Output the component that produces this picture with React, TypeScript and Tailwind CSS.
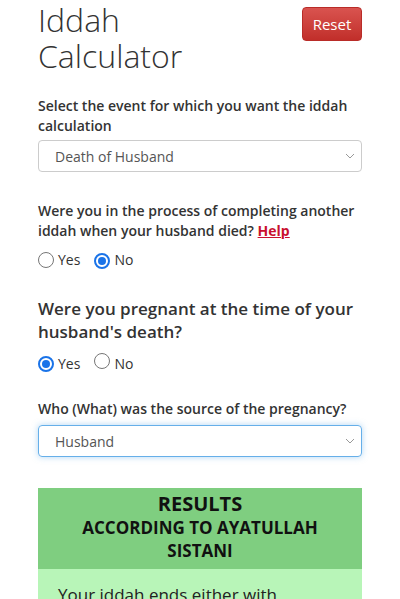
import React from "react";

function Radio({ checked }: { checked: boolean }) {
  return checked ? (
    <span className="inline-flex h-[16px] w-[16px] items-center justify-center rounded-full border-[2px] border-[#1a73e8] bg-white">
      <span className="h-[8px] w-[8px] rounded-full bg-[#1a73e8]" />
    </span>
  ) : (
    <span className="inline-block h-[16px] w-[16px] rounded-full border border-[#767676] bg-white" />
  );
}

function Chevron() {
  return (
    <svg width="10" height="6" viewBox="0 0 10 6" fill="none" className="absolute right-[6px] top-1/2 -translate-y-1/2">
      <path d="M1 1l4 4 4-4" stroke="#999" strokeWidth="1" />
    </svg>
  );
}

function RadioRow({ yes }: { yes: boolean }) {
  return (
    <div className="flex items-center text-[14px] leading-[20px] text-[#333]">
      <Radio checked={yes} />
      <span className="ml-[4px]">Yes</span>
      <span className="ml-[14px]">
        <Radio checked={!yes} />
      </span>
      <span className="ml-[4px]">No</span>
    </div>
  );
}

export default function App() {
  return (
    <div className="min-h-[599px] bg-white px-[38px] text-[#333]" style={{ fontFamily: '"Open Sans", sans-serif' }}>
      <div className="flex items-start justify-between pt-[2px]">
        <h1 className="text-[32px] font-light leading-[36px] text-[#333]">
          Iddah
          <br />
          Calculator
        </h1>
        <button className="mt-[5px] h-[34px] w-[60px] rounded-[4px] border border-[#b92c28] bg-gradient-to-b from-[#d9534f] to-[#c12e2a] text-[15px] text-white">
          Reset
        </button>
      </div>

      <p className="mt-[22px] text-[14px] font-semibold leading-[20px]">
        Select the event for which you want the iddah calculation
      </p>
      <div className="relative mt-[4px] flex h-[32px] items-center rounded-[4px] border border-[#ccc] pl-[16px] text-[14px] text-[#555]">
        Death of Husband
        <Chevron />
      </div>

      <p className="mt-[29px] text-[14px] font-semibold leading-[20px]">
        Were you in the process of completing another iddah when your husband died?{" "}
        <span className="font-bold text-[#c9102f] underline">Help</span>
      </p>
      <div className="mt-[9px]">
        <RadioRow yes={false} />
      </div>

      <p className="mt-[27px] text-[17px] font-semibold leading-[23px]">
        Were you pregnant at the time of your husband's death?
      </p>
      <div className="mt-[10px]">
        <RadioRow yes={true} />
      </div>

      <p className="mt-[25px] text-[14px] font-semibold leading-[20px]">
        Who (What) was the source of the pregnancy?
      </p>
      <div className="relative mt-[6px] flex h-[32px] items-center rounded-[4px] border border-[#66afe9] pl-[16px] text-[14px] text-[#555] shadow-[0_0_6px_rgba(102,175,233,0.5)]">
        Husband
        <Chevron />
      </div>

      <div className="mt-[31px]">
        <div className="bg-[#7fce80] pb-[7px] pt-[4px] text-center font-bold text-[#111]">
          <div className="text-[20px] leading-[24px]">RESULTS</div>
          <div className="text-[17px] leading-[23px]">
            ACCORDING TO AYATULLAH
            <br />
            SISTANI
          </div>
        </div>
        <div className="bg-[#b8f5b8] px-[20px] pb-[20px] pt-[14px] text-[17px] leading-[24px] text-[#222]">
          Your iddah ends either with childbirth or after four months and ten days, whichever is later.
        </div>
      </div>
    </div>
  );
}
